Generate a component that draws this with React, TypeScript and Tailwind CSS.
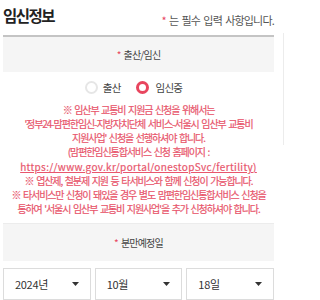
import React from "react";

const KR = { fontFamily: '"Noto Sans CJK KR", "Noto Sans", sans-serif' };

function Caret() {
  return (
    <svg width="7" height="4" viewBox="0 0 7 4" className="shrink-0">
      <path d="M0 0 L7 0 L3.5 4 Z" fill="#333" />
    </svg>
  );
}

function Select({ label }: { label: string }) {
  return (
    <div className="flex-1 h-[32px] border border-[#dcdcdc] bg-white flex items-center justify-between pl-[11px] pr-[11px]">
      <span className="text-[11px] text-[#333] tracking-[-0.3px]">{label}</span>
      <Caret />
    </div>
  );
}

export default function App() {
  const lines = [
    "※ 임산부 교통비 지원금 신청을 위해서는",
    "'정부24-맘편한임신-지방자치단체 서비스-서울시 임산부 교통비",
    "지원사업' 신청을 선행하셔야 합니다.",
    "(맘편한임신통합서비스 신청 홈페이지 :",
  ];
  const lines2 = [
    "※ 엽산제, 철분제 지원 등 타서비스와 함께 신청이 가능합니다.",
    "※ 타서비스만 신청이 돼있을 경우 별도 맘편한임신통합서비스 신청을",
    "통하여 '서울시 임산부 교통비 지원사업'을 추가 신청하셔야 합니다.",
  ];
  return (
    <div className="w-[285px] h-[300px] bg-white overflow-hidden flex" style={KR}>
      <div className="w-[274px] pl-[3px] flex flex-col">
        <div className="h-[35px] flex items-center justify-between">
          <span className="text-[15.5px] font-bold text-[#222] tracking-[-1.5px] leading-none -mt-[3px]">임신정보</span>
          <span className="text-[11px] text-[#555] tracking-[-0.8px] [word-spacing:1.5px] mt-[6px]">
            <span className="text-[#e8455e]">*</span> 는 필수 입력 사항입니다.
          </span>
        </div>
        <div className="h-[2px] bg-[#c4c4c4]" />
        <div className="h-[36px] bg-[#f5f5f5] flex items-center justify-center text-[10px] text-[#444] tracking-[-0.8px]">
          <span className="text-[#e8455e] mr-[3px]">*</span>출산/임신
        </div>
        <div className="h-[30px] flex items-center justify-center pr-[10px] text-[10.5px] text-[#444] tracking-[-0.8px]">
          <span className="w-[13px] h-[13px] rounded-full border-[2px] border-[#e6e6e6] bg-white mr-[5px]" />
          <span>출산</span>
          <span className="w-[13px] h-[13px] rounded-full border-[3.5px] border-[#e8455e] bg-white ml-[15px] mr-[7px]" />
          <span>임신중</span>
        </div>
        <div className="flex flex-col items-center text-[10px] leading-[14px] text-[#e8566c] tracking-[-1.1px] [word-spacing:1.5px] pt-[1px] [-webkit-text-stroke:0.2px_#e8566c]">
          {lines.map((l) => (
            <div key={l} className="whitespace-nowrap">{l}</div>
          ))}
          <div className="whitespace-nowrap underline text-[10px] tracking-[0.35px] mt-[1px]">https://www.gov.kr/portal/onestopSvc/fertility)</div>
          {lines2.map((l) => (
            <div key={l} className="whitespace-nowrap">{l}</div>
          ))}
        </div>
        <div className="mt-[7px] h-[38px] bg-[#f5f5f5] border-t border-[#ececec] flex items-center justify-center text-[10px] text-[#444] tracking-[-0.8px]">
          <span className="text-[#e8455e] mr-[3px]">*</span>분만예정일
        </div>
        <div className="mt-[7px] flex gap-[4px]">
          <Select label="2024년" />
          <Select label="10월" />
          <Select label="18일" />
        </div>
      </div>
      <div className="ml-[9px] mt-[33px] w-[1px] h-[112px] bg-[#ececec]" />
    </div>
  );
}
